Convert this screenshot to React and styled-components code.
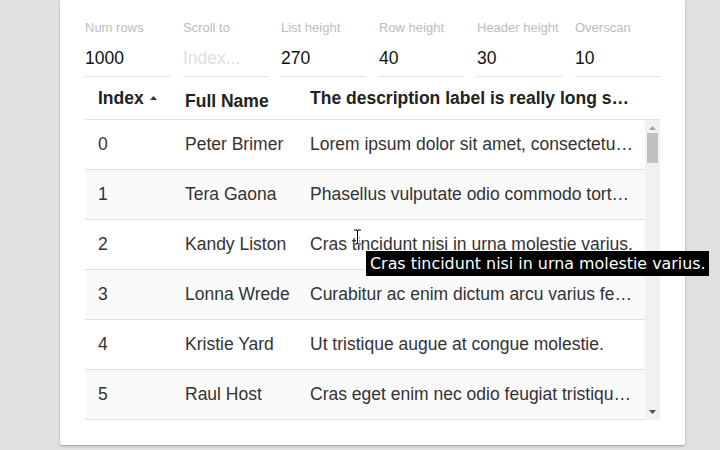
import React from 'react';
import styled, { createGlobalStyle } from 'styled-components';

const GlobalStyle = createGlobalStyle`
  html, body {
    margin: 0;
    background: #e0e0e0;
    font-family: "Liberation Sans", Arial, sans-serif;
    overflow: hidden;
  }
`;

const Page = styled.div`
  width: 720px;
  height: 450px;
  padding-left: 60px;
  box-sizing: border-box;
`;

const Card = styled.div`
  position: relative;
  width: 625px;
  background: #fff;
  border-radius: 0 0 2px 2px;
  box-shadow: 0 1px 3px rgba(0, 0, 0, 0.2), 0 1px 1px rgba(0, 0, 0, 0.14);
  padding: 20px 25px 25px;
  box-sizing: border-box;
`;

const Controls = styled.div`
  display: flex;
  gap: 13px;
`;

const Field = styled.label`
  width: 85px;
  display: flex;
  flex-direction: column;
  border-bottom: 1px solid #e0e0e0;
`;

const FieldLabel = styled.span`
  font-size: 13px;
  line-height: 16px;
  color: #bdbdbd;
`;

const FieldValue = styled.span`
  font-size: 17.5px;
  line-height: 20px;
  padding: 12px 0 8px;
  color: ${p => (p.placeholder ? '#e0e0e0' : '#111')};
`;

const Table = styled.div`
  width: 575px;
`;

const HeaderRow = styled.div`
  display: flex;
  height: 42px;
  border-bottom: 1px solid #e0e0e0;
  font-weight: 700;
  font-size: 17.5px;
  color: #222;
`;

const HeadCell = styled.div`
  width: ${p => p.w}px;
  padding-left: ${p => p.pl}px;
  padding-top: ${p => (p.drop ? 14 : 11)}px;
  box-sizing: border-box;
  white-space: nowrap;
  overflow: hidden;
  text-overflow: ellipsis;
`;

const SortArrow = styled.svg`
  width: 7px;
  height: 4px;
  margin-left: 6px;
  vertical-align: 4px;
  fill: #333;
`;

const Body = styled.div`
  display: flex;
  height: 300px;
`;

const Rows = styled.div`
  width: 560px;
`;

const Row = styled.div`
  display: flex;
  height: 50px;
  align-items: center;
  border-bottom: 1px solid #e0e0e0;
  box-sizing: border-box;
  background: ${p => (p.odd ? '#fafafa' : '#fff')};
  font-size: 17.5px;
  color: #333;
`;

const Cell = styled.div`
  width: ${p => p.w}px;
  padding-left: ${p => p.pl}px;
  padding-bottom: 1px;
  box-sizing: border-box;
  white-space: nowrap;
  overflow: hidden;
  text-overflow: ellipsis;
`;

const ScrollTrack = styled.div`
  width: 15px;
  background: #f1f1f1;
  display: flex;
  flex-direction: column;
  align-items: center;
  justify-content: space-between;
`;

const ScrollArrow = styled.svg`
  width: 7px;
  height: 4px;
  margin: ${p => (p.down ? '0 0 6px' : '6px 0 0')};
  fill: ${p => (p.down ? '#505050' : '#a3a3a3')};
`;

const Thumb = styled.div`
  width: 11px;
  height: 30px;
  background: #c1c1c1;
  margin-top: 3px;
`;

const Spacer = styled.div`
  flex: 1;
`;

const Tooltip = styled.div`
  position: absolute;
  left: 306px;
  top: 251px;
  background: #000;
  color: #fff;
  font-family: "DejaVu Sans", sans-serif;
  font-size: 15.9px;
  line-height: 25px;
  padding: 0 3px 0 4px;
  white-space: nowrap;
`;

const Cursor = styled.svg`
  position: absolute;
  left: 293px;
  top: 229px;
  width: 9px;
  height: 16px;
`;

const data = [
  ['0', 'Peter Brimer', 'Lorem ipsum dolor sit amet, consectetur adipiscing elit.'],
  ['1', 'Tera Gaona', 'Phasellus vulputate odio commodo tortor sodales.'],
  ['2', 'Kandy Liston', 'Cras tincidunt nisi in urna molestie varius.'],
  ['3', 'Lonna Wrede', 'Curabitur ac enim dictum arcu varius fermentum vel sodales dui.'],
  ['4', 'Kristie Yard', 'Ut tristique augue at congue molestie.'],
  ['5', 'Raul Host', 'Cras eget enim nec odio feugiat tristique eu quis ante.'],
];

export default function App() {
  const fields = [
    ['Num rows', '1000'],
    ['Scroll to', 'Index...', true],
    ['List height', '270'],
    ['Row height', '40'],
    ['Header height', '30'],
    ['Overscan', '10'],
  ];
  return (
    <Page>
      <GlobalStyle />
      <Card>
        <Controls>
          {fields.map(([label, value, ph]) => (
            <Field key={label}>
              <FieldLabel>{label}</FieldLabel>
              <FieldValue placeholder={ph}>{value}</FieldValue>
            </Field>
          ))}
        </Controls>
        <Table>
          <HeaderRow>
            <HeadCell w={100} pl={13}>
              Index
              <SortArrow viewBox="0 0 7 4"><path d="M0 4L3.5 0L7 4Z" /></SortArrow>
            </HeadCell>
            <HeadCell w={125} pl={0} drop>Full Name</HeadCell>
            <HeadCell w={323} pl={0}>The description label is really long so that it will be truncated</HeadCell>
          </HeaderRow>
          <Body>
            <Rows>
              {data.map(([i, name, desc], n) => (
                <Row key={i} odd={n % 2 === 1}>
                  <Cell w={100} pl={13}>{i}</Cell>
                  <Cell w={125} pl={0}>{name}</Cell>
                  <Cell w={323} pl={0}>{desc}</Cell>
                </Row>
              ))}
            </Rows>
            <ScrollTrack>
              <ScrollArrow viewBox="0 0 7 4"><path d="M0 4L3.5 0L7 4Z" /></ScrollArrow>
              <Thumb />
              <Spacer />
              <ScrollArrow down viewBox="0 0 7 4"><path d="M0 0L7 0L3.5 4Z" /></ScrollArrow>
            </ScrollTrack>
          </Body>
        </Table>
        <Cursor viewBox="0 0 9 16">
          <path d="M1 1h3v1h1V1h3M4.5 2v12M1 15h3v-1h1v1h3" stroke="#fff" strokeWidth="3" fill="none" />
          <path d="M1 1h3v1h1V1h3M4.5 2v12M1 15h3v-1h1v1h3" stroke="#000" strokeWidth="1" fill="none" />
        </Cursor>
        <Tooltip>Cras tincidunt nisi in urna molestie varius.</Tooltip>
      </Card>
    </Page>
  );
}
